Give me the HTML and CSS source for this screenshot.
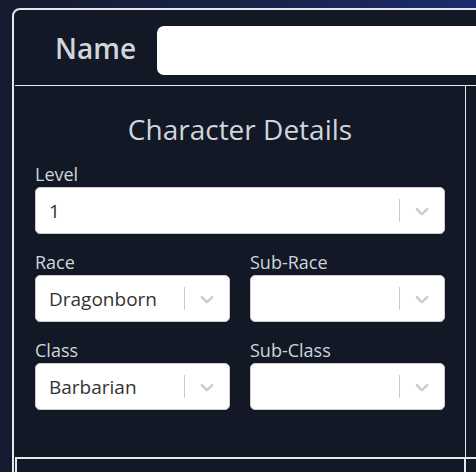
FILE: index.html
```html
<!DOCTYPE html>
<html>
<head>
<meta charset="utf-8">
<link rel="stylesheet" href="styles.css">
</head>
<body>
<div class="card">
  <header class="name-row">
    <label class="name-label">Name</label>
    <div class="name-input"></div>
  </header>
  <div class="grid">
    <section class="details">
      <h2 class="title">Character Details</h2>
      <div class="field">
        <div class="label">Level</div>
        <div class="select"><span class="value">1</span><span class="sep"></span><svg class="chev" viewBox="0 0 20 20"><path d="M4.516 7.548c0.436-0.446 1.043-0.481 1.576 0l3.908 3.747 3.908-3.747c0.533-0.481 1.141-0.446 1.574 0 0.436 0.445 0.408 1.197 0 1.615-0.406 0.418-4.695 4.502-4.695 4.502-0.217 0.223-0.502 0.335-0.787 0.335s-0.57-0.112-0.789-0.335c0 0-4.287-4.084-4.695-4.502s-0.436-1.170 0-1.615z"/></svg></div>
      </div>
      <div class="pair">
        <div class="field">
          <div class="label">Race</div>
          <div class="select"><span class="value">Dragonborn</span><span class="sep"></span><svg class="chev" viewBox="0 0 20 20"><path d="M4.516 7.548c0.436-0.446 1.043-0.481 1.576 0l3.908 3.747 3.908-3.747c0.533-0.481 1.141-0.446 1.574 0 0.436 0.445 0.408 1.197 0 1.615-0.406 0.418-4.695 4.502-4.695 4.502-0.217 0.223-0.502 0.335-0.787 0.335s-0.57-0.112-0.789-0.335c0 0-4.287-4.084-4.695-4.502s-0.436-1.170 0-1.615z"/></svg></div>
        </div>
        <div class="field">
          <div class="label">Sub-Race</div>
          <div class="select"><span class="value"></span><span class="sep"></span><svg class="chev" viewBox="0 0 20 20"><path d="M4.516 7.548c0.436-0.446 1.043-0.481 1.576 0l3.908 3.747 3.908-3.747c0.533-0.481 1.141-0.446 1.574 0 0.436 0.445 0.408 1.197 0 1.615-0.406 0.418-4.695 4.502-4.695 4.502-0.217 0.223-0.502 0.335-0.787 0.335s-0.57-0.112-0.789-0.335c0 0-4.287-4.084-4.695-4.502s-0.436-1.170 0-1.615z"/></svg></div>
        </div>
      </div>
      <div class="pair">
        <div class="field">
          <div class="label">Class</div>
          <div class="select"><span class="value">Barbarian</span><span class="sep"></span><svg class="chev" viewBox="0 0 20 20"><path d="M4.516 7.548c0.436-0.446 1.043-0.481 1.576 0l3.908 3.747 3.908-3.747c0.533-0.481 1.141-0.446 1.574 0 0.436 0.445 0.408 1.197 0 1.615-0.406 0.418-4.695 4.502-4.695 4.502-0.217 0.223-0.502 0.335-0.787 0.335s-0.57-0.112-0.789-0.335c0 0-4.287-4.084-4.695-4.502s-0.436-1.170 0-1.615z"/></svg></div>
        </div>
        <div class="field">
          <div class="label">Sub-Class</div>
          <div class="select"><span class="value"></span><span class="sep"></span><svg class="chev" viewBox="0 0 20 20"><path d="M4.516 7.548c0.436-0.446 1.043-0.481 1.576 0l3.908 3.747 3.908-3.747c0.533-0.481 1.141-0.446 1.574 0 0.436 0.445 0.408 1.197 0 1.615-0.406 0.418-4.695 4.502-4.695 4.502-0.217 0.223-0.502 0.335-0.787 0.335s-0.57-0.112-0.789-0.335c0 0-4.287-4.084-4.695-4.502s-0.436-1.170 0-1.615z"/></svg></div>
        </div>
      </div>
    </section>
    <section class="side"></section>
  </div>
  <div class="bottom">
    <div class="box"></div>
    <div class="box"></div>
  </div>
</div>
</body>
</html>
```
FILE: styles.css
```css
html, body {
  margin: 0;
  padding: 0;
  overflow: hidden;
}
body {
  width: 476px;
  height: 472px;
  background: linear-gradient(to right, #141b2f 0%, #172246 50%, #1c2b6e 100%);
  font-family: "Open Sans", "Noto Sans", sans-serif;
}
.card {
  margin: 8px 0 0 12px;
  width: 800px;
  height: 600px;
  box-sizing: border-box;
  border: 2px solid #e5e7eb;
  border-top-left-radius: 8px;
  background: #121826;
  padding-left: 1px;
}
.name-row {
  display: flex;
  align-items: center;
  gap: 21px;
  height: 76px;
  box-sizing: border-box;
  padding: 16px 0 11px 40px;
  border-bottom: 1px solid #e5e7eb;
}
.name-label {
  color: #d1d5db;
  font-size: 28px;
  font-weight: 600;
  line-height: 40px;
  margin-bottom: 4px;
}
.name-input {
  flex: 1;
  height: 49px;
  background: #fff;
  border-radius: 7px;
}
.grid {
  display: flex;
  height: 371px;
}
.details {
  width: 451px;
  box-sizing: border-box;
  padding: 25px 20px 0 20px;
  border-right: 1px solid #e5e7eb;
}
.side {
  flex: 1;
}
.title {
  margin: 0 0 16px 0;
  text-align: center;
  font-size: 28px;
  font-weight: 400;
  line-height: 36px;
  color: #d1d5db;
}
.pair {
  display: grid;
  grid-template-columns: 1fr 1fr;
  gap: 20px;
  margin-top: 17px;
}
.field {
  display: flex;
  flex-direction: column;
}
.label {
  color: #d1d5db;
  font-size: 18px;
  line-height: 22px;
  margin-bottom: 2px;
}
.select {
  display: flex;
  align-items: center;
  height: 47px;
  box-sizing: border-box;
  background: #fff;
  border: 1px solid #cccccc;
  border-radius: 5px;
}
.value {
  flex: 1;
  padding-left: 13px;
  color: #333333;
  font-size: 19px;
  white-space: nowrap;
}
.sep {
  align-self: stretch;
  width: 1px;
  margin: 11px 0;
  background: #cccccc;
}
.chev {
  width: 22px;
  height: 22px;
  margin: 0 11px 0 11px;
  fill: #cccccc;
}
.bottom {
  display: flex;
}
.box {
  width: 451px;
  height: 100px;
  box-sizing: border-box;
  border: 2px solid #e5e7eb;
}
.box + .box {
  width: 300px;
  border-left: none;
}
```
